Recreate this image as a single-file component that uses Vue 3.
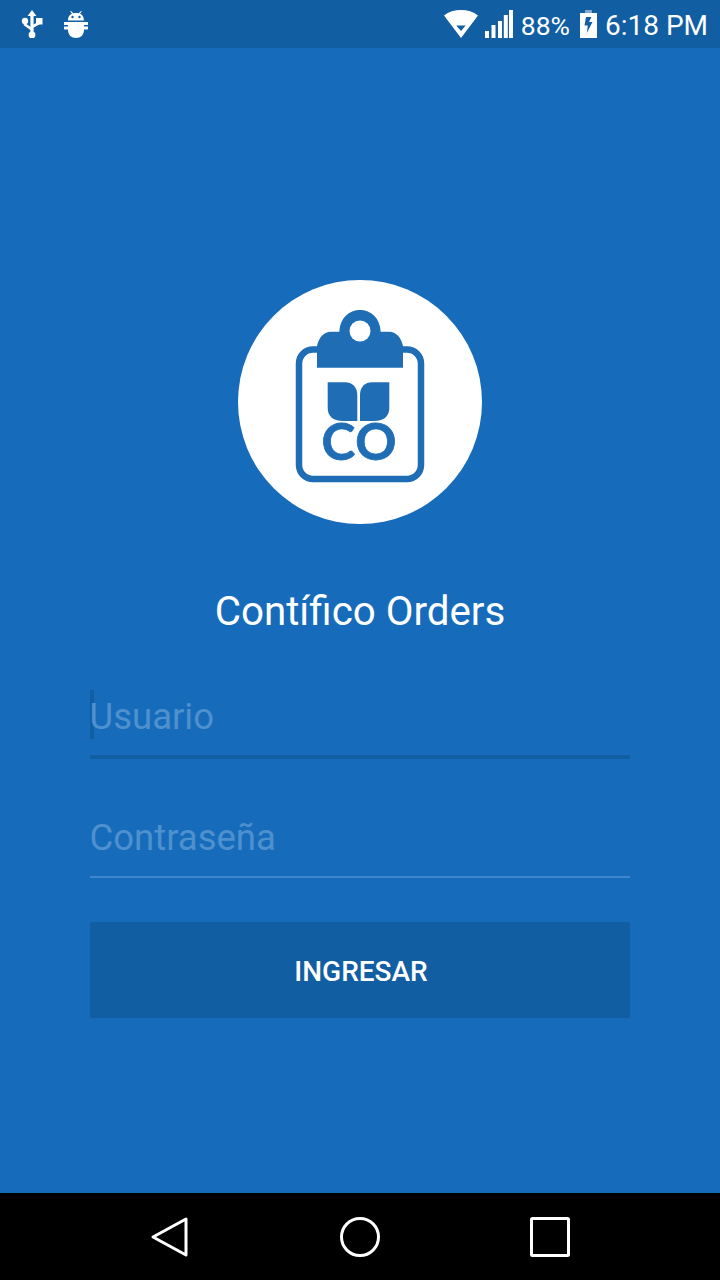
<template>
    <div class="screen">
        <div class="status-bar">
            <svg class="icon-usb" width="22" height="28" viewBox="0 0 22 28">
                <path d="M11 0 L15.500 6 H12.600 V22 H9.400 V6 H6.500 Z" fill="#fff"/>
                <path d="M4 11 V14.500 L11 19.500 M18 11 V13 L11 17" fill="none" stroke="#fff" stroke-width="2.600"/>
                <circle cx="11" cy="25" r="3.400" fill="#fff"/>
                <circle cx="4" cy="11" r="3.200" fill="#fff"/>
                <rect x="15" y="8" width="6.500" height="6.500" fill="#fff"/>
            </svg>
            <svg class="icon-android" width="24" height="27" viewBox="0 0 24 27">
                <path d="M4 8 C4.500 5 6 3.500 8 2.800 L6.200 0.600 L7 0 L9.300 2.300 C11 1.800 13 1.800 14.700 2.300 L17 0 L17.800 0.600 L16 2.800 C18 3.500 19.500 5 20 9.500 H4 Z" fill="#fff"/>
                <circle cx="8.500" cy="6" r="1.200" fill="#115ea3"/>
                <circle cx="15.500" cy="6" r="1.200" fill="#115ea3"/>
                <path d="M0 11 H24 V14 H20 V15.500 H24 V18.500 H20 V19 C20 24 16.500 27 12 27 C7.500 27 4 24 4 19 V18.500 H0 V15.500 H4 V14 H0 Z" fill="#fff"/>
            </svg>
            <div class="status-right">
                <svg width="34" height="28" viewBox="0 0 34 28">
                    <path fill-rule="evenodd" d="M0 5.500 C9 -1.800 25 -1.800 34 5.500 L17 28 Z M12.300 15.500 L17 21 L21.700 15.500 Z" fill="#fff"/>
                </svg>
                <svg class="icon-signal" width="28" height="28" viewBox="0 0 28 28">
                    <rect x="0" y="21" width="4" height="7" fill="#fff"/>
                    <rect x="6.500" y="15" width="4" height="13" fill="#fff"/>
                    <rect x="13" y="11" width="4" height="17" fill="#fff"/>
                    <rect x="18.800" y="5" width="4" height="23" fill="#fff"/>
                    <rect x="24" y="0" width="4" height="28" fill="#fff"/>
                </svg>
                <span class="status-text pct">88%</span>
                <svg class="icon-battery" width="17" height="28" viewBox="0 0 17 28">
                    <rect x="5" y="0" width="7" height="3" fill="#7fa9cf"/>
                    <path fill-rule="evenodd" d="M0 3 H17 V28 H0 Z M6 7 L4.500 15.500 H7.800 L6.800 23 L12.500 12 H9 L11.500 7 Z" fill="#fff"/>
                </svg>
                <span class="status-text time">6:18 PM</span>
            </div>
        </div>

        <div class="login">
            <svg class="logo" width="244" height="244" viewBox="0 0 244 244">
                <circle cx="122" cy="122" r="122" fill="#fff"/>
                <rect x="61" y="69.500" width="122" height="129.500" rx="14" fill="none" stroke="#1f6db5" stroke-width="6.500"/>
                <path d="M79 87.700 V66 C81 57 86 51.700 93 51.700 H101.300 C102 38 111 30 122 30 C133 30 142 38 142.700 51.700 H151 C158 51.700 163 57 165 66 V87.700 Z" fill="#1f6db5"/>
                <circle cx="122" cy="51" r="10.500" fill="#fff"/>
                <path d="M89.700 102.300 H107 C114 102.300 119.300 107 119.300 115 V141 H105 C96 141 89.700 137 89.700 128 Z" fill="#1f6db5"/>
                <path d="M151.300 102.300 H134 C127 102.300 122 107 122 115 V141 H136 C145 141 151.300 137 151.300 128 Z" fill="#1f6db5"/>
                <text class="logo-co" x="121.500" y="180" text-anchor="middle">CO</text>
            </svg>
            <h1 class="title">Contífico Orders</h1>
            <form class="form" @submit.prevent>
                <div class="field active">
                    <span class="caret"></span>
                    <input v-model="usuario" type="text" placeholder="Usuario">
                </div>
                <div class="field">
                    <input v-model="password" type="password" placeholder="Contraseña">
                </div>
                <button class="submit" type="submit">INGRESAR</button>
            </form>
        </div>

        <div class="nav-bar">
            <svg width="40" height="42" viewBox="0 0 40 42">
                <path d="M36 3 V39 L3 21 Z" fill="none" stroke="#fff" stroke-width="3" stroke-linejoin="round"/>
            </svg>
            <svg width="42" height="42" viewBox="0 0 42 42">
                <circle cx="21" cy="21" r="18.500" fill="none" stroke="#fff" stroke-width="3"/>
            </svg>
            <svg width="40" height="40" viewBox="0 0 40 40">
                <rect x="1.500" y="1.500" width="37" height="37" rx="1" fill="none" stroke="#fff" stroke-width="3"/>
            </svg>
        </div>
    </div>
</template>

<script setup>
import { ref } from 'vue';

const usuario = ref('');
const password = ref('');
</script>

<style>
html, body {
    margin: 0;
    background: #166cbb;
}
</style>

<style scoped>
.screen {
    display: flex;
    flex-direction: column;
    height: 1280px;
    width: 720px;
    overflow: hidden;
    background: #166cbb;
    font-family: Roboto, "Liberation Sans", sans-serif;
}

.status-bar {
    display: flex;
    align-items: center;
    flex: 0 0 48px;
    box-sizing: border-box;
    padding: 0 12px 0 21px;
    background: #115ea3;
    color: #fff;
}

.icon-android {
    margin-left: 21px;
}

.status-right {
    display: flex;
    align-items: center;
    margin-left: auto;
}

.icon-signal {
    margin-left: 7px;
}

.status-text {
    font-size: 28px;
    line-height: 32px;
    padding-top: 3px;
    white-space: nowrap;
}

.pct {
    margin-left: 8px;
    font-size: 26.500px;
}

.icon-battery {
    margin-left: 10px;
}

.time {
    margin-left: 8px;
}

.login {
    flex: 1;
    display: flex;
    flex-direction: column;
    align-items: center;
    padding-top: 232px;
}

.logo {
    display: block;
}

.logo-co {
    font-family: Lato, Roboto, sans-serif;
    font-size: 51px;
    font-weight: 700;
    letter-spacing: 1px;
    fill: #1f6db5;
    stroke: #1f6db5;
    stroke-width: 0.8px;
}

.title {
    margin: 63px 0 0;
    font-size: 40.300px;
    line-height: 50px;
    font-weight: 400;
    color: #fff;
}

.form {
    width: 540px;
    margin-top: 53px;
}

.field {
    position: relative;
    border-bottom: 2px solid #3f86cc;
    margin-bottom: 44px;
}

.field + .field {
    margin-top: 56px;
}

.field.active {
    border-bottom: 4px solid #115ea3;
}

.field input {
    position: relative;
    display: block;
    width: 100%;
    height: 61px;
    box-sizing: border-box;
    padding: 0 0 17px;
    border: 0;
    outline: 0;
    background: transparent;
    font-family: inherit;
    font-size: 36.500px;
    text-indent: -0.500px;
    color: #fff;
}

.field.active input {
    height: 65px;
    padding-bottom: 13px;
}

.field input::placeholder {
    color: #4f90ce;
    opacity: 1;
}

.caret {
    position: absolute;
    left: 0;
    top: 0;
    width: 4px;
    height: 49px;
    background: #115ea3;
}

.submit {
    display: block;
    width: 100%;
    height: 96px;
    padding: 2px 0 0 2px;
    border: 0;
    background: #115ea3;
    color: #fff;
    font-family: inherit;
    font-size: 28px;
    font-weight: 500;
}

.nav-bar {
    flex: 0 0 87px;
    display: flex;
    align-items: center;
    justify-content: space-between;
    box-sizing: border-box;
    padding: 0 150.500px 0 149.500px;
    background: #000;
}
</style>
